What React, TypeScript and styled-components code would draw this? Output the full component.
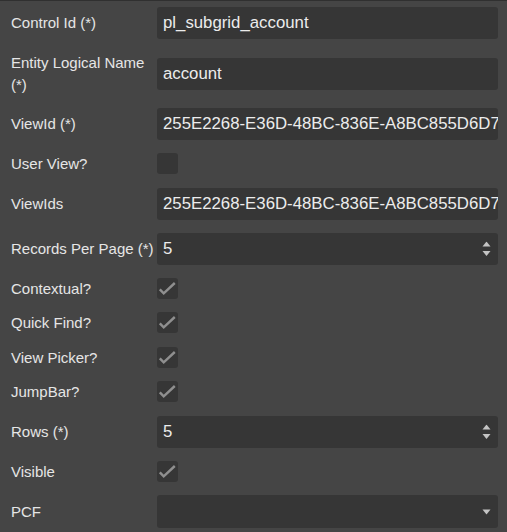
import styled, { createGlobalStyle } from "styled-components";

const Global = createGlobalStyle`
  html, body {
    margin: 0;
    padding: 0;
    background: #454545;
  }
`;

const Panel = styled.div`
  width: 507px;
  height: 532px;
  box-sizing: border-box;
  border-top: 1px solid #303030;
  padding: 6px 9px 0 11px;
  background: #454545;
  display: flex;
  flex-direction: column;
  gap: 13px;
  font-family: "Liberation Sans", Arial, sans-serif;
  overflow: hidden;
`;

const Row = styled.div`
  display: grid;
  grid-template-columns: 146px 1fr;
  align-items: center;
`;

const Label = styled.div`
  font-size: 15px;
  line-height: 21.5px;
  color: #e6e6e6;
`;

const Field = styled.div<{ $tall?: boolean }>`
  position: relative;
  height: ${(p) => (p.$tall ? 33 : 32)}px;
  box-sizing: border-box;
  background: #363636;
  border-radius: 3px;
  padding: 0 2px 0 6px;
  display: flex;
  align-items: center;
  font-size: 16.8px;
  color: #ececec;
  white-space: nowrap;
  overflow: hidden;
`;

const Arrows = styled.svg`
  position: absolute;
  right: 7px;
  top: 50%;
  transform: translateY(-50%);
`;

const Box = styled.div`
  width: 21px;
  height: 21px;
  border-radius: 3px;
  background: #363636;
`;

const Check = ({ on }: { on?: boolean }) => (
  <Box>
    {on && (
      <svg width="21" height="21" viewBox="0 0 21 21">
        <polyline points="2.8,11.3 6.7,15.3 17.8,5" fill="none" stroke="#8f8f8f" strokeWidth="2.4" />
      </svg>
    )}
  </Box>
);

const Spinner = () => (
  <Arrows width="9" height="15" viewBox="0 0 9 15">
    <polygon points="4.5,0 8.5,5 0.5,5" fill="#c4c4c4" />
    <polygon points="0.5,9.5 8.5,9.5 4.5,14.5" fill="#c4c4c4" />
  </Arrows>
);

const Caret = () => (
  <Arrows width="9" height="6" viewBox="0 0 9 6">
    <polygon points="0.5,0.5 8.5,0.5 4.5,5.5" fill="#c4c4c4" />
  </Arrows>
);

const viewId = "255E2268-E36D-48BC-836E-A8BC855D6D7A";

export default function App() {
  return (
    <>
      <Global />
      <Panel>
        <Row>
          <Label>Control Id (*)</Label>
          <Field>pl_subgrid_account</Field>
        </Row>
        <Row>
          <Label>Entity Logical Name (*)</Label>
          <Field>account</Field>
        </Row>
        <Row>
          <Label>ViewId (*)</Label>
          <Field>{viewId}</Field>
        </Row>
        <Row>
          <Label>User View?</Label>
          <Check />
        </Row>
        <Row>
          <Label>ViewIds</Label>
          <Field>{viewId}</Field>
        </Row>
        <Row>
          <Label>Records Per Page (*)</Label>
          <Field>
            5
            <Spinner />
          </Field>
        </Row>
        <Row>
          <Label>Contextual?</Label>
          <Check on />
        </Row>
        <Row>
          <Label>Quick Find?</Label>
          <Check on />
        </Row>
        <Row>
          <Label>View Picker?</Label>
          <Check on />
        </Row>
        <Row>
          <Label>JumpBar?</Label>
          <Check on />
        </Row>
        <Row>
          <Label>Rows (*)</Label>
          <Field>
            5
            <Spinner />
          </Field>
        </Row>
        <Row>
          <Label>Visible</Label>
          <Check on />
        </Row>
        <Row>
          <Label>PCF</Label>
          <Field $tall>
            <Caret />
          </Field>
        </Row>
      </Panel>
    </>
  );
}
